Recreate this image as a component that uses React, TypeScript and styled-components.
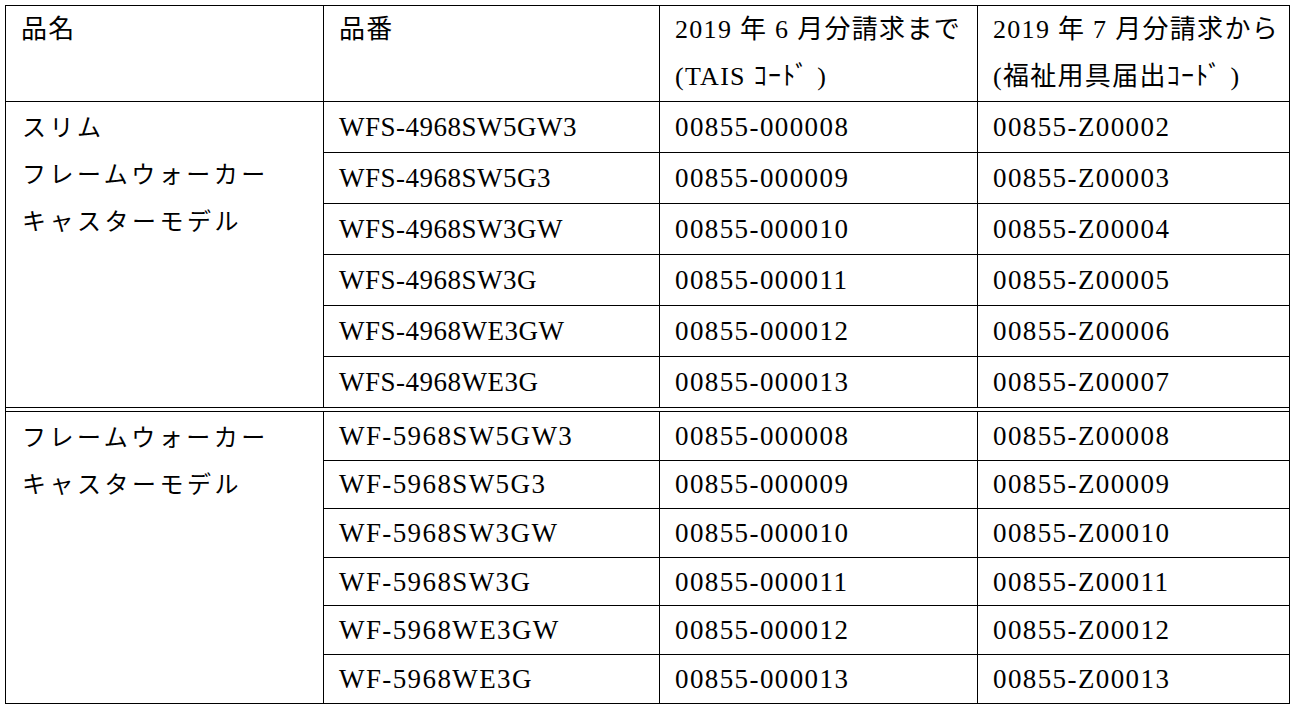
import styled, { createGlobalStyle } from "styled-components";

const GlobalStyle = createGlobalStyle`
  html, body {
    margin: 0;
    background: #fff;
  }
`;

const Page = styled.div`
  padding: 5px 0 0 5px;
  font-family: "Liberation Serif", "Noto Sans CJK JP", serif;
  color: #000;
`;

const Table = styled.table`
  border-collapse: collapse;
  table-layout: fixed;
  width: 1284px;
`;

const HeadCell = styled.th`
  border: 1px solid #000;
  padding: 0 0 1px 15px;
  text-align: left;
  vertical-align: top;
  font-weight: normal;
  font-size: 26px;
  letter-spacing: 1.3px;
  line-height: 47px;
  white-space: nowrap;
`;

const Row = styled.tr<{ $h: number }>`
  height: ${(p) => p.$h}px;
`;

const NameCell = styled.td`
  border: 1px solid #000;
  padding: 0 0 0 16px;
  vertical-align: top;
  font-family: "Noto Sans CJK JP", sans-serif;
  font-size: 24px;
  letter-spacing: 3.5px;
  line-height: 47px;
  white-space: nowrap;
`;

const CodeCell = styled.td<{ $ls: number }>`
  border: 1px solid #000;
  padding: 0 0 0 15px;
  vertical-align: middle;
  font-size: 27px;
  letter-spacing: ${(p) => p.$ls}px;
  line-height: 30px;
  white-space: nowrap;
`;

const SepRow = styled.tr`
  height: 3px;
  td {
    padding: 0;
    height: 3px;
    font-size: 0;
    line-height: 0;
    border: 1px solid #000;
  }
`;

type Item = [string, string, string];

const groups: { name: string[]; rowH: number; partLs: number; items: Item[] }[] = [
  {
    name: ["スリム", "フレームウォーカー", "キャスターモデル"],
    rowH: 51,
    partLs: 0.5,
    items: [
      ["WFS-4968SW5GW3", "00855-000008", "00855-Z00002"],
      ["WFS-4968SW5G3", "00855-000009", "00855-Z00003"],
      ["WFS-4968SW3GW", "00855-000010", "00855-Z00004"],
      ["WFS-4968SW3G", "00855-000011", "00855-Z00005"],
      ["WFS-4968WE3GW", "00855-000012", "00855-Z00006"],
      ["WFS-4968WE3G", "00855-000013", "00855-Z00007"],
    ],
  },
  {
    name: ["フレームウォーカー", "キャスターモデル"],
    rowH: 48.6,
    partLs: 1.4,
    items: [
      ["WF-5968SW5GW3", "00855-000008", "00855-Z00008"],
      ["WF-5968SW5G3", "00855-000009", "00855-Z00009"],
      ["WF-5968SW3GW", "00855-000010", "00855-Z00010"],
      ["WF-5968SW3G", "00855-000011", "00855-Z00011"],
      ["WF-5968WE3GW", "00855-000012", "00855-Z00012"],
      ["WF-5968WE3G", "00855-000013", "00855-Z00013"],
    ],
  },
];

const App = () => {
  return (
    <>
      <GlobalStyle />
      <Page>
        <Table>
          <colgroup>
            <col style={{ width: 318 }} />
            <col style={{ width: 336 }} />
            <col style={{ width: 318 }} />
            <col style={{ width: 312 }} />
          </colgroup>
          <thead>
            <tr>
              <HeadCell>品名</HeadCell>
              <HeadCell>品番</HeadCell>
              <HeadCell>
                2019 年 6 月分請求まで
                <br />
                (TAIS ｺｰﾄﾞ )
              </HeadCell>
              <HeadCell>
                2019 年 7 月分請求から
                <br />
                (福祉用具届出ｺｰﾄﾞ )
              </HeadCell>
            </tr>
          </thead>
          {groups.map((g, gi) => (
            <tbody key={gi}>
              {gi > 0 && (
                <SepRow>
                  <td colSpan={4} />
                </SepRow>
              )}
              {g.items.map((it, i) => (
                <Row key={it[0]} $h={g.rowH}>
                  {i === 0 && (
                    <NameCell rowSpan={g.items.length}>
                      {g.name.map((n) => (
                        <div key={n}>{n}</div>
                      ))}
                    </NameCell>
                  )}
                  <CodeCell $ls={g.partLs}>{it[0]}</CodeCell>
                  <CodeCell $ls={1.4}>{it[1]}</CodeCell>
                  <CodeCell $ls={1.4}>{it[2]}</CodeCell>
                </Row>
              ))}
            </tbody>
          ))}
        </Table>
      </Page>
    </>
  );
};

export default App;
